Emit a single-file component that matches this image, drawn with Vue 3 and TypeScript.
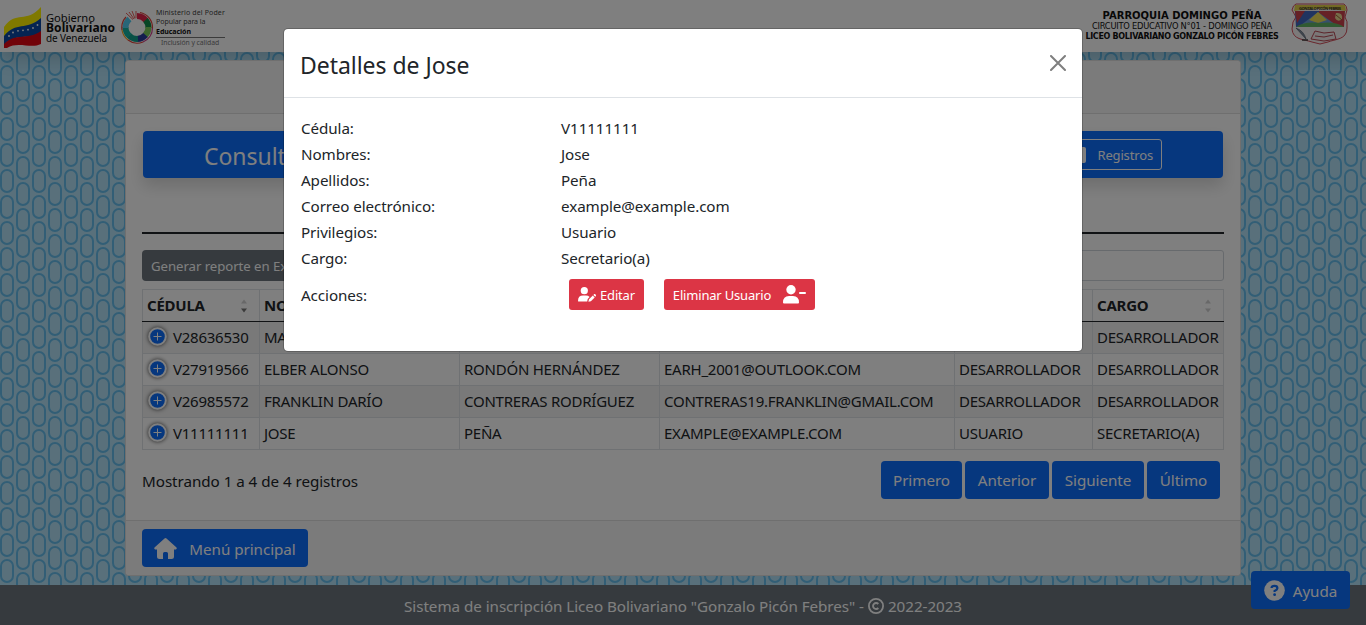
<script setup lang="ts">
interface Row { id: string; nombres: string; apellidos: string; correo: string; privilegio: string; cargo: string }

const columns: string[] = ['CÉDULA', 'NOMBRES', 'APELLIDOS', 'CORREO', 'PRIVILEGIO', 'CARGO']
const rows: Row[] = [
  { id: 'V28636530', nombres: 'MA', apellidos: '', correo: '', privilegio: '', cargo: 'DESARROLLADOR' },
  { id: 'V27919566', nombres: 'ELBER ALONSO', apellidos: 'RONDÓN HERNÁNDEZ', correo: 'EARH_2001@OUTLOOK.COM', privilegio: 'DESARROLLADOR', cargo: 'DESARROLLADOR' },
  { id: 'V26985572', nombres: 'FRANKLIN DARÍO', apellidos: 'CONTRERAS RODRÍGUEZ', correo: 'CONTRERAS19.FRANKLIN@GMAIL.COM', privilegio: 'DESARROLLADOR', cargo: 'DESARROLLADOR' },
  { id: 'V11111111', nombres: 'JOSE', apellidos: 'PEÑA', correo: 'EXAMPLE@EXAMPLE.COM', privilegio: 'USUARIO', cargo: 'SECRETARIO(A)' },
]
const details: [string, string][] = [
  ['Cédula:', 'V11111111'],
  ['Nombres:', 'Jose'],
  ['Apellidos:', 'Peña'],
  ['Correo electrónico:', 'example@example.com'],
  ['Privilegios:', 'Usuario'],
  ['Cargo:', 'Secretario(a)'],
]
const pages: { label: string; cls: string }[] = [
  { label: 'Primero', cls: 'p1' }, { label: 'Anterior', cls: 'p2' },
  { label: 'Siguiente', cls: 'p3' }, { label: 'Último', cls: 'p4' },
]
</script>

<template>
  <div class="page">
    <svg class="pattern" width="1366" height="625">
      <defs>
        <pattern id="pills" width="32" height="26" patternUnits="userSpaceOnUse">
          <g fill="none" stroke="#64bdec" stroke-width="2">
            <rect x="1" y="-12" width="12" height="22" rx="6" />
            <rect x="1" y="14" width="12" height="22" rx="6" />
            <rect x="17" y="1" width="12" height="22" rx="6" />
          </g>
        </pattern>
      </defs>
      <rect width="1366" height="625" fill="url(#pills)" />
    </svg>

    <header class="top">
      <div class="gov">
        <svg class="flag" width="38" height="42" viewBox="0 0 38 42">
          <path d="M0 20C12 3 22 17 37 0V13C24 24 13 16 0 31Z" fill="#fff200" />
          <path d="M0 29C12 14 22 24 37 11V25C24 34 13 25 0 38Z" fill="#0a49a5" />
          <path d="M0 37C12 25 22 34 37 24V37C27 42 14 34 3 41H0Z" fill="#e30613" />
          <g fill="#fff"><circle cx="5" cy="29" r=".9" /><circle cx="9" cy="25.500" r=".9" /><circle cx="14" cy="23.800" r=".9" /><circle cx="19" cy="23.300" r=".9" /><circle cx="24" cy="22.700" r=".9" /><circle cx="29" cy="21" r=".9" /><circle cx="33.500" cy="18" r=".9" /></g>
        </svg>
        <div class="gov-text"><span>Gobierno</span><b>Bolivariano</b><span class="ven">de Venezuela</span></div>
        <svg class="ring" width="33" height="34" viewBox="0 0 33 34">
          <g fill="none" stroke-width="6">
            <path d="M16 6A11.500 11.500 0 0 1 25 10.500" stroke="#e5254b" />
            <path d="M24.500 10A11.500 11.500 0 0 1 27.500 18" stroke="#138a4a" />
            <path d="M27.500 17A11.500 11.500 0 0 1 24 25.500" stroke="#7ccc5a" />
            <path d="M24.500 25A11.500 11.500 0 0 1 16 29" stroke="#283a9c" />
            <path d="M17 29A11.500 11.500 0 0 1 8 25.500" stroke="#10a08c" />
            <path d="M8.500 26A11.500 11.500 0 0 1 4.500 17" stroke="#12b3a0" />
            <path d="M4.500 18A11.500 11.500 0 0 1 8.500 9" stroke="#50cdf0" />
          </g>
          <path d="M5 7A15.300 15.300 0 0 0 1 20" fill="none" stroke="#e0453d" stroke-width="1.200" />
          <path d="M1 20A15.300 15.300 0 0 0 7 30" fill="none" stroke="#f5a623" stroke-width="1.200" />
          <path d="M7 30A15.300 15.300 0 0 0 22 32" fill="none" stroke="#e0453d" stroke-width="1.200" />
          <path d="M22 32A15.300 15.300 0 0 0 31.500 18" fill="none" stroke="#cf3d8a" stroke-width="1.200" />
          <path d="M31.500 18A15.300 15.300 0 0 0 19 2.500" fill="none" stroke="#e0453d" stroke-width="1.200" />
          <path d="M5 3L12 9.500M8 2L13 9M11 1L14 8.500M15 1V8" stroke="#e34a46" stroke-width=".9" />
        </svg>
        <div class="ministry"><span class="m1">Ministerio del Poder</span><span class="m2">Popular para la</span><b>Educación</b><i>Inclusión y calidad</i></div>
      </div>
      <div class="school">
        <div class="school-text"><b class="s1">PARROQUIA DOMINGO PEÑA</b><span class="s2">CIRCUITO EDUCATIVO N°01 - DOMINGO PEÑA</span><b class="s3">LICEO BOLIVARIANO GONZALO PICÓN FEBRES</b></div>
        <svg width="58" height="42" viewBox="0 0 58 42">
          <path d="M5 1H53Q56 3 56 7L54 14Q57 18 56 25C56 37 44 36 37 39L29 41L21 39C12 36 2 37 1 26Q1 18 5 14L1 7Q2 2 5 1Z" fill="#f8f4f4" stroke="#d44e5a" />
          <path d="M4 8H28V24H5Z" fill="#4068c0" />
          <path d="M28 8H54L53 24H28Z" fill="#cd424c" />
          <path d="M4 8L14 8L6 20Z" fill="#cd424c" />
          <path d="M4 2H54L55 8Q29 3 3 8Z" fill="#e4d24b" />
          <text x="29" y="6.500" font-size="4" font-weight="700" text-anchor="middle" textLength="42" fill="#343021">GONZALO PICÓN FEBRES</text>
          <path d="M10 22L27 9L45 22Z" fill="#6f9fd8" /><path d="M18 17L27 9L36 17L27 20Z" fill="#f0df55" />
          <path d="M5 24Q13 18 29 20Q45 18 53 24Z" fill="#63b565" />
          <path d="M45 10Q52 9 51 16Q47 20 44 15Z" fill="#eadb93" /><path d="M45 12L51 17" stroke="#9d6435" />
          <path d="M20 36L24 28L33 30L43 29L45 36L33 38Z" fill="#f5eeee" stroke="#b94a55" /><path d="M24 33L33 34L42 32" fill="none" stroke="#b94a55" />
          <path d="M5 25L15 36Q13 28 5 25Z" fill="#8392a0" stroke="#445161" stroke-width=".6" /><path d="M11 37H17" stroke="#444" stroke-width="1.500" />
        </svg>
      </div>
    </header>

    <main class="card">
      <div class="card-head"></div>
      <div class="card-body">
        <div class="banner">
          <span class="banner-title">Consultar usuarios</span>
          <span class="reg"><svg width="16" height="16" viewBox="0 0 16 16"><rect width="16" height="16" rx="2" fill="#fff" /></svg><span>Registros</span></span>
        </div>
        <div class="rule"></div>
        <div class="tools"><button class="export"><span>Generar reporte en Excel</span></button><div class="search"></div></div>
        <table>
          <colgroup><col class="c1"><col class="c2"><col class="c3"><col class="c4"><col class="c5"><col class="c6"></colgroup>
          <thead><tr><th v-for="(c, i) in columns" :key="c"><div class="th"><span>{{ c }}</span>
            <svg width="6" height="14" viewBox="0 0 6 14"><path d="M0 4.500L3 .5L6 4.500Z" fill="#d0d0d1" /><path d="M0 9.500H6L3 13.500Z" :fill="i === 0 ? '#777' : '#d0d0d1'" /></svg></div></th></tr></thead>
          <tbody><tr v-for="r in rows" :key="r.id">
            <td class="id"><div><svg class="plus" width="21" height="21" viewBox="0 0 21 21"><circle cx="10.500" cy="10.500" r="8.300" fill="#0d6efd" stroke="#fff" stroke-width="2" /><path d="M6.500 10.500H14.500M10.500 6.500V14.500" stroke="#fff" stroke-width="1" /></svg><span>{{ r.id }}</span></div></td>
            <td>{{ r.nombres }}</td><td>{{ r.apellidos }}</td><td>{{ r.correo }}</td><td>{{ r.privilegio }}</td><td>{{ r.cargo }}</td>
          </tr></tbody>
        </table>
        <div class="below"><span class="info">Mostrando 1 a 4 de 4 registros</span><div class="pager"><button v-for="p in pages" :key="p.label" :class="p.cls">{{ p.label }}</button></div></div>
      </div>
      <div class="card-foot"><button class="home"><svg width="23" height="21" viewBox="0 0 23 21"><path d="M10.500.5Q11.500-.3 12.500.5L22.500 9.500Q23.300 10.700 22 11.500H20V18.500Q20 21 17.500 21H14V15.500Q14 14 12.500 14H10.500Q9 14 9 15.500V21H5.500Q3 21 3 18.500V11.500H1Q-.3 10.700.5 9.500Z" fill="#fff" /></svg><span>Menú principal</span></button></div>
    </main>

    <footer><span class="foot-a">Sistema de inscripción Liceo Bolivariano "Gonzalo Picón Febres" -</span>
      <svg width="16" height="16" viewBox="0 0 16 16" fill="none" stroke="#fff"><circle cx="8" cy="8" r="7.100" stroke-width="1.800" /><path d="M10.300 6A3 3 0 1 0 10.300 10" stroke-width="1.900" /></svg>
      <span class="foot-b">2022-2023</span></footer>
    <button class="help"><svg width="21" height="21" viewBox="0 0 21 21"><circle cx="10.500" cy="10.500" r="10.300" fill="#fff" /><path d="M7.500 8Q7.700 5.900 10.500 5.900Q13.400 5.900 13.400 8.200Q13.400 9.600 10.600 10.900V12" fill="none" stroke="#0d6efd" stroke-width="2.200" /><circle cx="10.600" cy="14.700" r="1.400" fill="#0d6efd" /></svg><span>Ayuda</span></button>

    <div class="backdrop"></div>
    <section class="modal" role="dialog">
      <div class="modal-head"><h5>Detalles de Jose</h5><svg width="16" height="16" viewBox="0 0 16 16"><path d="M1 1L15 15M15 1L1 15" stroke="#7f7f7f" stroke-width="2" stroke-linecap="round" /></svg></div>
      <div class="modal-body">
        <div v-for="d in details" :key="d[0]" class="detail"><span>{{ d[0] }}</span><span>{{ d[1] }}</span></div>
        <div class="detail actions"><span>Acciones:</span><div class="buttons">
          <button class="edit"><svg width="18" height="15" viewBox="0 0 18 15" fill="#fff"><circle cx="6.300" cy="3.700" r="3.600" /><path d="M0 14Q0 8.600 5 8.600H8Q10.200 8.600 11.600 10L9.700 12L9.200 14.500H.8Q0 14.500 0 14Z" /><path d="M10.400 14.700L11 12.300L14.800 8.500L16.700 10.400L12.900 14.200ZM15.400 7.900L16.200 7.100Q16.700 6.700 17.300 7.300Q18.400 8.300 17.900 8.900L17.200 9.700Z" /></svg><span>Editar</span></button>
          <button class="delete"><span>Eliminar Usuario</span><svg width="23" height="19" viewBox="0 0 23 19" fill="#fff"><circle cx="8" cy="4.700" r="4.700" /><path d="M0 17.500Q0 11 6 11H10Q16 11 16 17.500Q16 18.600 15 18.600H1Q0 18.600 0 17.500Z" /><rect x="16" y="7" width="7" height="1.900" rx=".9" /></svg></button>
        </div></div>
      </div>
    </section>
  </div>
</template>

<style>
body { margin: 0; overflow: hidden; }
</style>
<style scoped>
* { box-sizing: border-box; }
.page { position: relative; width: 1366px; height: 625px; overflow: hidden; background: #b2e0f6; color: #212529; font: 15.200px/24px "Noto Sans", "Open Sans", sans-serif; letter-spacing: -.04px; display: flex; flex-direction: column; }
button { font: inherit; letter-spacing: inherit; border: 0; margin: 0; padding: 0; color: #fff; border-radius: 4px; white-space: nowrap; display: flex; align-items: center; justify-content: center; }
svg { display: block; flex: none; }
.pattern { position: absolute; inset: 0; }
.top { position: relative; height: 52px; flex: none; background: #fff; box-shadow: 0 8px 16px rgba(0,0,0,.15); display: flex; justify-content: space-between; padding: 0 17px 0 4px; }
.gov { display: flex; }
.flag { margin-top: 7px; }
.gov-text { margin: 13px 0 0 4px; width: 77px; display: flex; flex-direction: column; font-size: 11.200px; line-height: 10px; color: #111; white-space: nowrap; }
.gov-text b { font-size: 12px; letter-spacing: .1px; }
.gov-text .ven { font-size: 10px; letter-spacing: -.1px; }
.ring { margin: 10px 0 0 -2px; }
.ministry { margin: 8px 0 0 2px; display: flex; flex-direction: column; width: 69px; font-size: 7px; line-height: 9.300px; color: #444; white-space: nowrap; }
.m1 { letter-spacing: .13px; }
.ministry b { color: #111; }
.ministry i { font-style: normal; border-top: 1px solid #777; margin-top: 1px; padding-left: 5px; line-height: 10px; color: #777; font-size: 6.800px; }
.school { display: flex; padding-top: 3px; gap: 12px; }
.school-text { width: 194px; display: flex; flex-direction: column; align-items: center; font-family: "DejaVu Sans", sans-serif; color: #111; padding-top: 7px; white-space: nowrap; }
.s1 { font-size: 10px; line-height: 11px; letter-spacing: 0; }
.s2 { font-size: 8.300px; line-height: 11px; letter-spacing: -.22px; }
.s3 { font-size: 8px; line-height: 10px; letter-spacing: -.32px; }
.card { position: relative; margin: 8px 125px 0; height: 516px; border: 1px solid rgba(0,0,0,.125); border-radius: 4px; background: #fff; flex: none; }
.card-head { height: 53px; background: #f7f7f7; border-bottom: 1px solid #dfdfdf; border-radius: 4px 4px 0 0; }
.card-body { padding: 17px 16px 0; height: 406px; }
.banner { height: 47px; margin: 0 1px; border-radius: 4px; background: #0d6efd; color: #fff; box-shadow: 0 8px 16px rgba(0,0,0,.15); display: flex; justify-content: space-between; align-items: center; padding: 1px 61px; }
.banner-title { font-size: 23px; padding: 2px 0 0; }
.reg { height: 31px; border: 1px solid #fff; border-radius: 3px; width: 101px; display: flex; align-items: center; justify-content: flex-end; padding-right: 8px; gap: 11px; font-size: 13px; letter-spacing: -.15px; }
.rule { margin-top: 54px; border-top: 2px solid #212529; }
.tools { margin-top: 16px; display: flex; height: 31px; }
.export { background: #6c757d; width: 300px; justify-content: flex-start; padding-left: 9px; font-size: 13.200px; letter-spacing: -.05px; }
.search { margin-left: auto; width: 300px; border: 1px solid #ced4da; border-radius: 3px; }
table { width: 1082px; margin-top: 8px; table-layout: fixed; border-collapse: collapse; font-size: 15px; letter-spacing: -.24px; }
.c1 { width: 117px; } .c2 { width: 200px; } .c3 { width: 200px; } .c4 { width: 295px; } .c5 { width: 138px; } .c6 { width: 131px; }
th, td { padding: 0 4px 2px; border: 1px solid #dee2e6; text-align: left; height: 32px; white-space: nowrap; line-height: 24px; }
thead th { border-bottom-color: #212529; }
.th { display: flex; justify-content: space-between; align-items: center; padding-right: 8px; }
.th svg { margin-top: 2px; }
tbody tr:nth-child(odd) { background: #f2f2f2; }
.id div { display: flex; align-items: center; gap: 5px; }
.plus { filter: drop-shadow(0 0 2px #444); }
.below { display: flex; justify-content: space-between; margin-top: 11px; padding-right: 4px; }
.info { margin-top: 8px; }
.pager { display: flex; gap: 3px; }
.pager button { height: 38px; background: #0d6efd; }
.pager .p1 { width: 81px; } .pager .p2 { width: 84px; } .pager .p3 { width: 92px; } .pager .p4 { width: 73px; }
.card-foot { border-top: 1px solid #dfdfdf; background: #f7f7f7; height: 55px; padding: 8px 16px; border-radius: 0 0 4px 4px; }
.home { background: #0d6efd; height: 38px; width: 166px; gap: 12px; }
.home span { padding-top: 2px; }
footer { position: relative; margin-top: 9px; height: 40px; background: #6c757d; color: #fff; display: flex; align-items: center; justify-content: center; gap: 4px; padding-top: 1px; }
.help { position: absolute; left: 1251px; top: 571px; width: 99px; height: 38px; background: #0d6efd; gap: 8px; }
.help span { padding-top: 2px; }
.backdrop { position: absolute; inset: 0; background: rgba(0,0,0,.5); }
.modal { position: absolute; left: 283px; top: 28px; width: 800px; height: 324px; border: 1px solid rgba(0,0,0,.2); border-radius: 5px; background: #fff; background-clip: padding-box; }
.modal-head { height: 69px; border-bottom: 1px solid #dee2e6; display: flex; align-items: center; justify-content: space-between; padding: 0 16px; }
h5 { margin: 3px 0 0; font-size: 23px; font-weight: 400; line-height: 30px; }
.modal-body { padding: 17px; letter-spacing: -.08px; }
.detail { display: grid; grid-template-columns: 260px 1fr; height: 26px; align-items: center; }
.actions { height: 47px; }
.buttons { display: flex; gap: 20px; padding-left: 8px; font-size: 13px; letter-spacing: -.18px; }
.buttons button { background: #dc3545; height: 31px; border-radius: 3px; }
.edit { width: 75px; gap: 4px; } .delete { width: 151px; gap: 12px; }
</style>
